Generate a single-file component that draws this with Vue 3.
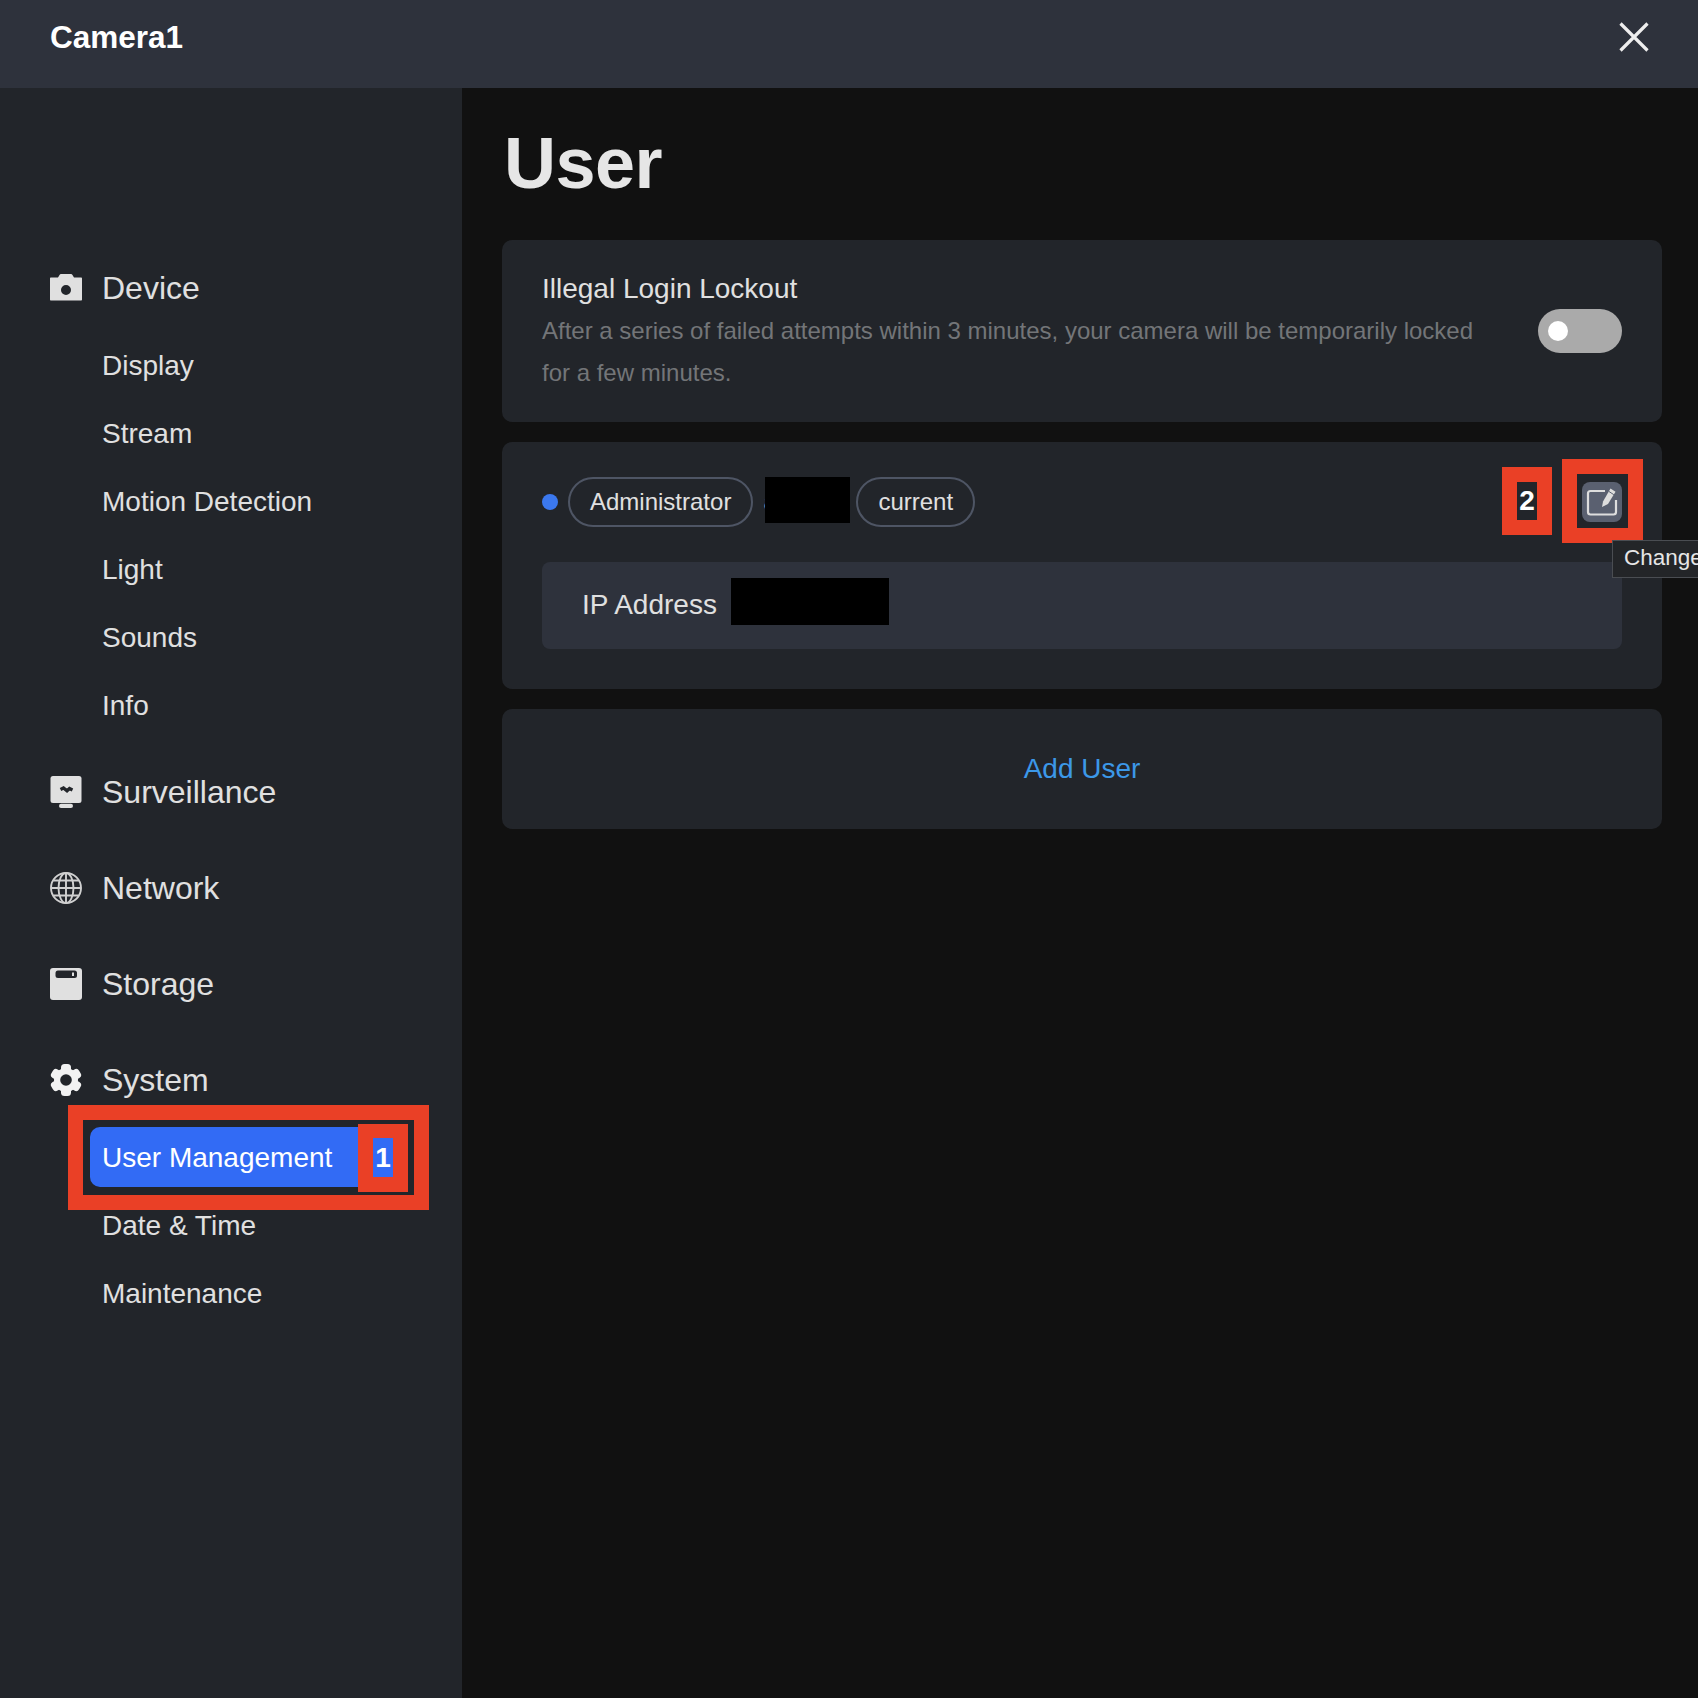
<script setup>
const deviceItems = ['Display', 'Stream', 'Motion Detection', 'Light', 'Sounds', 'Info']
</script>

<template>
  <div class="page">
    <header class="topbar">
      <span class="camera-name">Camera1</span>
      <svg class="close" viewBox="0 0 30 30" fill="none" stroke="#eeeeee" stroke-width="3.200">
        <path d="M1.500 1.500 28.500 28.500M28.500 1.500 1.500 28.500" />
      </svg>
    </header>
    <div class="body">
      <aside class="sidebar">
        <section class="group">
          <div class="head">
            <svg class="icon" viewBox="0 0 32 32">
              <path fill-rule="evenodd" fill="#e0e0e0" d="M1 5.500h7L9.700 2.800c.2-.5.7-.8 1.200-.8h10.200c.5 0 1 .3 1.200.8L24 5.500h7c.6 0 1 .4 1 1v21c0 .6-.4 1-1 1H1c-.6 0-1-.4-1-1v-21c0-.6.4-1 1-1zM16 13a5 5 0 1 0 0 10 5 5 0 0 0 0-10z" />
            </svg>
            <span>Device</span>
          </div>
          <ul class="sublist">
            <li v-for="item in deviceItems" :key="item" class="sub">{{ item }}</li>
          </ul>
        </section>
        <section class="group">
          <div class="head">
            <svg class="icon" viewBox="0 0 32 32">
              <rect x="0.500" y="0" width="31" height="27" rx="2.500" fill="#e0e0e0" />
              <rect x="9" y="27.800" width="14" height="4.200" rx="2.100" fill="#e0e0e0" />
              <path d="M10.500 13.500l3-1.500 3.500 2.800 2.500-2.300 3 1.500" fill="none" stroke="#22252a" stroke-width="3.200" />
            </svg>
            <span>Surveillance</span>
          </div>
        </section>
        <section class="group">
          <div class="head">
            <svg class="icon" viewBox="0 0 32 32" fill="none" stroke="#d0d0d0" stroke-width="1.900">
              <circle cx="16" cy="16" r="15" />
              <ellipse cx="16" cy="16" rx="7.500" ry="15" />
              <path d="M16 1v30M1 16h30M3.500 8.500h25M3.500 23.500h25" />
            </svg>
            <span>Network</span>
          </div>
        </section>
        <section class="group">
          <div class="head">
            <svg class="icon" viewBox="0 0 32 32">
              <rect x="0" y="0" width="32" height="32" rx="3" fill="#e0e0e0" />
              <rect x="5.500" y="2.500" width="21.500" height="7.500" rx="2.500" fill="#22252a" />
              <rect x="22" y="4.500" width="2" height="3.500" fill="#e0e0e0" />
            </svg>
            <span>Storage</span>
          </div>
        </section>
        <section class="group">
          <div class="head">
            <svg class="icon" viewBox="0 0 32 32" fill="#f2f2f2">
              <circle cx="16" cy="16" r="12" />
              <rect x="11" y="0" width="10" height="32" rx="3.500" />
              <rect x="11" y="0" width="10" height="32" rx="3.500" transform="rotate(60 16 16)" />
              <rect x="11" y="0" width="10" height="32" rx="3.500" transform="rotate(120 16 16)" />
              <circle cx="16" cy="16" r="5.800" fill="#22252a" />
            </svg>
            <span>System</span>
          </div>
          <ul class="sublist">
            <li class="sub active">User Management</li>
            <li class="sub">Date &amp; Time</li>
            <li class="sub">Maintenance</li>
          </ul>
        </section>
      </aside>

      <main class="main">
        <h1 class="title">User</h1>
        <section class="card lockout">
          <div class="lockout-text">
            <div class="lockout-title">Illegal Login Lockout</div>
            <p class="lockout-desc">After a series of failed attempts within 3 minutes, your camera will be temporarily locked for a few minutes.</p>
          </div>
          <div class="toggle"><span class="knob"></span></div>
        </section>
        <section class="card user">
          <div class="user-row">
            <span class="dot"></span>
            <span class="tag">Administrator</span>
            <span class="name"><span class="name-a">a</span><span class="redact redact-name"></span></span>
            <span class="tag">current</span>
            <button class="edit" type="button">
              <svg viewBox="0 0 40 40" width="40" height="40">
                <path d="M23 9H8.500C7.100 9 6 10.100 6 11.500v18.500C6 31.400 7.100 32.500 8.500 32.500h23c1.400 0 2.500-1.100 2.500-2.500V18" fill="none" stroke="#dddddd" stroke-width="2.200" />
                <path d="M20 25 21 19.500 28.500 6.500 33.500 9.800 26 22z" fill="#dddddd" />
                <path d="M27 9.500 31.800 12.700" fill="none" stroke="#5a6070" stroke-width="1" />
              </svg>
            </button>
          </div>
          <div class="ip-row">
            <span>IP Address</span>
            <span class="redact redact-ip"></span>
          </div>
        </section>
        <section class="card add"><span class="add-link">Add User</span></section>
      </main>
    </div>

    <div class="mark frame-one"></div>
    <div class="mark box-one"><span class="num num-one">1</span></div>
    <div class="mark box-two"><span class="num num-two">2</span></div>
    <div class="mark frame-two"></div>
    <div class="tooltip">Change Password</div>
  </div>
</template>

<style>
html, body { margin: 0; background: #111111; }
</style>

<style scoped>
.page {
  position: relative;
  width: 1698px;
  height: 1698px;
  overflow: hidden;
  display: flex;
  flex-direction: column;
  background: #111111;
  color: #e0e0e0;
  font-family: "Liberation Sans", Arial, sans-serif;
}
.topbar {
  height: 88px;
  flex: none;
  background: #2e323c;
  display: flex;
  align-items: flex-start;
  justify-content: space-between;
  padding: 0 50px;
  box-sizing: border-box;
}
.camera-name {
  font-size: 31.500px;
  font-weight: 700;
  line-height: 74px;
  color: #ffffff;
}
.close { width: 30px; height: 30px; margin-top: 22px; margin-right: -1px; }
.body { flex: 1; display: flex; min-height: 0; }
.sidebar {
  width: 462px;
  flex: none;
  background: #22252a;
  box-sizing: border-box;
  padding-top: 153px;
}
.group { padding-bottom: 2px; }
.head {
  height: 94px;
  display: flex;
  align-items: center;
  gap: 20px;
  padding-left: 50px;
  font-size: 32px;
  color: #e0e0e0;
}
.icon { width: 32px; height: 32px; flex: none; }
.sublist {
  list-style: none;
  margin: 0;
  padding: 0 0 8px;
  display: flex;
  flex-direction: column;
  gap: 8px;
}
.sub {
  height: 60px;
  line-height: 62px;
  margin-left: 90px;
  padding-left: 12px;
  font-size: 28px;
  color: #e0e0e0;
}
.active {
  width: 298px;
  background: #326bf5;
  border-radius: 10px;
  color: #ffffff;
}
.main {
  flex: 1;
  min-width: 0;
  padding: 0 36px 0 40px;
  box-sizing: border-box;
}
.title {
  margin: 0;
  padding-left: 2px;
  height: 152px;
  font-size: 72px;
  line-height: 150px;
  font-weight: 700;
  color: #e6e6e6;
  letter-spacing: -0.5px;
}
.card {
  background: #22252a;
  border-radius: 10px;
  margin-bottom: 20px;
  box-sizing: border-box;
}
.lockout {
  height: 182px;
  padding: 28px 40px 0;
  display: flex;
  justify-content: space-between;
  align-items: flex-start;
}
.lockout-text { width: 960px; }
.lockout-title { font-size: 28px; line-height: 42px; color: #e0e0e0; }
.lockout-desc {
  margin: 0;
  font-size: 24px;
  line-height: 42px;
  color: #737578;
}
.toggle {
  width: 84px;
  height: 44px;
  margin-top: 41px;
  border-radius: 22px;
  background: #aaaaaa;
  display: flex;
  align-items: center;
  padding-left: 10px;
  box-sizing: border-box;
}
.knob { width: 20px; height: 20px; border-radius: 50%; background: #ffffff; }
.user { height: 247px; padding: 35px 40px 0; }
.user-row { display: flex; align-items: flex-start; height: 50px; }
.dot {
  width: 16px;
  height: 16px;
  border-radius: 50%;
  background: #3b78ee;
  margin: 17px 10px 0 0;
  flex: none;
}
.tag {
  height: 50px;
  line-height: 45px;
  padding: 0 20px;
  border: 2px solid #4e5564;
  border-radius: 25px;
  box-sizing: border-box;
  font-size: 24px;
  color: #e0e0e0;
}
.name {
  display: flex;
  align-items: flex-start;
  margin: 0 6px 0 10px;
  font-size: 24px;
  line-height: 50px;
  width: 87px;
  color: #bdbdbd;
}
.name-a { width: 2px; height: 50px; overflow: hidden; flex: none; }
.redact { background: #000000; flex: none; display: block; }
.redact-name { width: 85px; height: 46px; }
.edit {
  margin-left: auto;
  width: 40px;
  height: 40px;
  margin-top: 5px;
  padding: 0;
  border: 0;
  border-radius: 8px;
  background: #5a6070;
}
.ip-row {
  margin-top: 35px;
  height: 87px;
  background: #2e323c;
  border-radius: 8px;
  padding: 16px 40px 0;
  box-sizing: border-box;
  display: flex;
  align-items: flex-start;
  gap: 14px;
  font-size: 28px;
  line-height: 54px;
  color: #e0e0e0;
}
.redact-ip { width: 158px; height: 47px; }
.add {
  height: 120px;
  display: flex;
  align-items: center;
  justify-content: center;
}
.add-link { font-size: 28px; color: #3c98e8; }

.mark { position: absolute; box-sizing: border-box; }
.frame-one {
  left: 68px;
  top: 1105px;
  width: 361px;
  height: 105px;
  border: 15px solid #ea4026;
}
.box-one {
  left: 358px;
  top: 1124px;
  width: 50px;
  height: 68px;
  border-style: solid;
  border-color: #ea4026;
  border-width: 14px 15px 15px;
  background: #326bf5;
}
.box-two {
  left: 1502px;
  top: 467px;
  width: 50px;
  height: 68px;
  border-style: solid;
  border-color: #ea4026;
  border-width: 15px;
  background: #22252a;
}
.frame-two {
  left: 1562px;
  top: 459px;
  width: 81px;
  height: 84px;
  border: 15px solid #ea4026;
}
.num {
  display: block;
  text-align: center;
  color: #ffffff;
  font-weight: 700;
  font-size: 28px;
}
.num-one { line-height: 39px; }
.num-two { line-height: 38px; }
.tooltip {
  position: absolute;
  left: 1612px;
  top: 540px;
  height: 38px;
  line-height: 34px;
  padding: 0 11px;
  box-sizing: border-box;
  background: #232528;
  border: 1px solid #4a4d52;
  font-size: 22.500px;
  color: #e6e6e6;
  white-space: nowrap;
}
</style>
